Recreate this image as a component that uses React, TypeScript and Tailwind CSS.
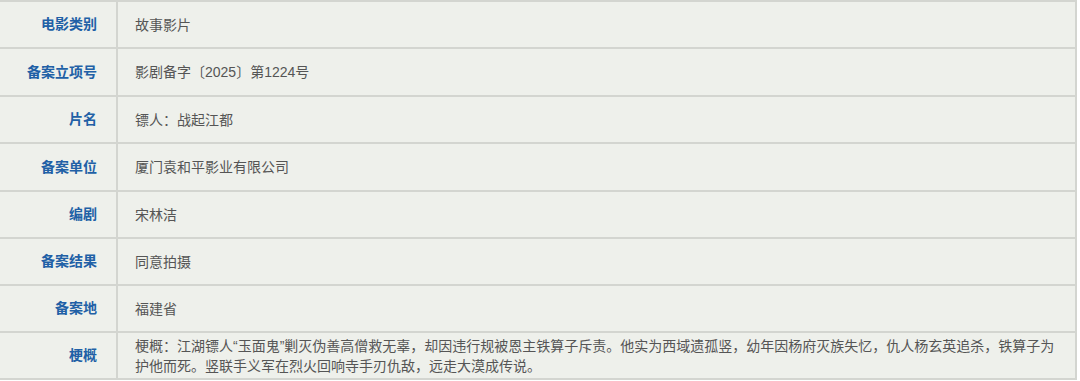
const rows: { label: string; value: string; h: string }[] = [
  { label: "电影类别", value: "故事影片", h: "h-[47px]" },
  { label: "备案立项号", value: "影剧备字〔2025〕第1224号", h: "h-[48px]" },
  { label: "片名", value: "镖人：战起江都", h: "h-[47px]" },
  { label: "备案单位", value: "厦门袁和平影业有限公司", h: "h-[48px]" },
  { label: "编剧", value: "宋林洁", h: "h-[47px]" },
  { label: "备案结果", value: "同意拍摄", h: "h-[47px]" },
  { label: "备案地", value: "福建省", h: "h-[47px]" },
];

const synopsis =
  "梗概：江湖镖人“玉面鬼”剿灭伪善高僧救无辜，却因违行规被恩主铁算子斥责。他实为西域遗孤竖，幼年因杨府灭族失忆，仇人杨玄英追杀，铁算子为护他而死。竖联手义军在烈火回响寺手刃仇敌，远走大漠成传说。";

function Row({ label, children, h }: { label: string; children: React.ReactNode; h: string }) {
  return (
    <div className={`flex ${h} border-b-2 border-[#d3d5d0]`}>
      <div className="flex w-[118px] shrink-0 items-center justify-end border-r-2 border-[#d3d5d0] pr-[19px] text-[14px] font-bold text-[#2160a6]">
        {label}
      </div>
      <div className="flex flex-1 items-center pl-[17px] pr-2 text-[14px] leading-[20px] text-[#555555]">
        {children}
      </div>
    </div>
  );
}

export default function App() {
  return (
    <div className="h-[381px] w-[1080px] bg-white font-['Liberation_Sans','Noto_Sans_CJK_SC',sans-serif]">
      <div className="w-[1077px] border-t-2 border-r-2 border-[#d3d5d0] bg-[#eef0eb]">
        {rows.map((r) => (
          <Row key={r.label} label={r.label} h={r.h}>
            {r.value}
          </Row>
        ))}
        <Row label="梗概" h="h-[47px]">
          <span className="block">{synopsis}</span>
        </Row>
      </div>
    </div>
  );
}
